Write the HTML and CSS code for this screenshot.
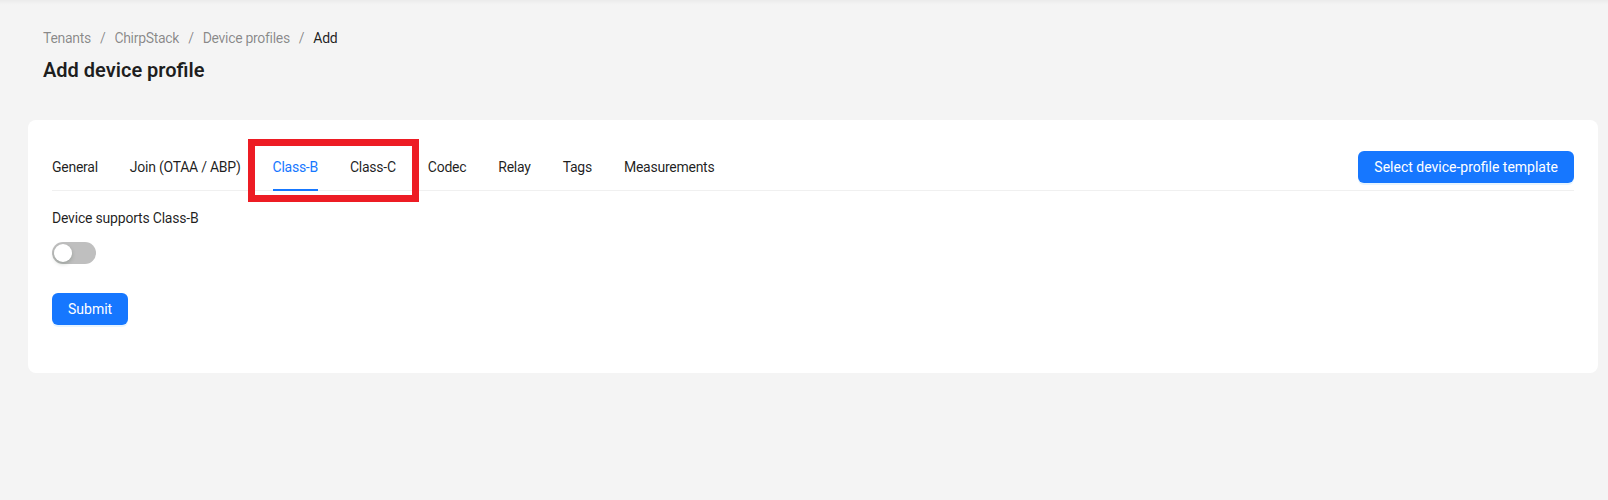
FILE: index.html
```html
<!DOCTYPE html>
<html lang="en">
<head>
<meta charset="utf-8">
<title>Add device profile</title>
<link rel="stylesheet" href="styles.css">
</head>
<body>
<div class="layout">
  <div class="main">
    <div class="page-header">
      <nav class="breadcrumb"><span class="crumb">Tenants</span><span class="sep">/</span><span class="crumb">ChirpStack</span><span class="sep">/</span><span class="crumb">Device profiles</span><span class="sep">/</span><span class="crumb current">Add</span></nav>
      <h1 class="title">Add device profile</h1>
    </div>
    <div class="card">
      <div class="tabs-nav">
        <div class="tab-list">
          <div class="tab">General</div>
          <div class="tab">Join (OTAA / ABP)</div>
          <div class="tab active">Class-B</div>
          <div class="tab">Class-C</div>
          <div class="tab">Codec</div>
          <div class="tab">Relay</div>
          <div class="tab">Tags</div>
          <div class="tab">Measurements</div>
        </div>
        <button class="btn btn-primary">Select device-profile template</button>
      </div>
      <div class="form-item">
        <label class="form-label">Device supports Class-B</label>
        <div class="form-control">
          <span class="switch"><span class="switch-handle"></span></span>
        </div>
      </div>
      <div class="form-item">
        <button class="btn btn-primary">Submit</button>
      </div>
      <div class="highlight"></div>
    </div>
  </div>
</div>
</body>
</html>
```

FILE: styles.css
```css
* { box-sizing: border-box; }

html, body {
  margin: 0;
  padding: 0;
}

body {
  background: #f4f4f4;
  font-family: Roboto, "Liberation Sans", Arial, sans-serif;
  font-size: 14px;
  letter-spacing: -0.2px;
  color: rgba(0, 0, 0, 0.88);
  height: 500px;
  overflow: hidden;
}

.layout {
  min-height: 500px;
  background: linear-gradient(to bottom, #ebebeb 0px, #f1f1f1 3px, #f4f4f4 5px);
}

.main {
  padding: 27px 10px 0 28px;
}

.page-header {
  padding: 0 15px;
}

.breadcrumb {
  line-height: 22px;
  color: rgba(0, 0, 0, 0.45);
  letter-spacing: -0.3px;
}

.sep {
  margin: 0 9px;
}

.crumb.current {
  color: rgba(0, 0, 0, 0.88);
}

.title {
  margin: 5px 0 0;
  font-size: 20px;
  font-weight: 600;
  line-height: 32px;
  letter-spacing: 0;
  color: rgba(0, 0, 0, 0.88);
}

.card {
  position: relative;
  margin-top: 34px;
  background: #fff;
  border-radius: 8px;
  padding: 24px;
}

.tabs-nav {
  display: flex;
  align-items: center;
  border-bottom: 1px solid #f0f0f0;
  margin-bottom: 16px;
}

.tab-list {
  display: flex;
  gap: 32px;
}

.tab {
  position: relative;
  padding: 12px 0;
  line-height: 22px;
  letter-spacing: -0.25px;
  color: rgba(0, 0, 0, 0.88);
}

.tab.active {
  color: #1677ff;
}

.tab.active::after {
  content: "";
  position: absolute;
  left: 0;
  right: 0;
  bottom: -1px;
  height: 2px;
  background: #1677ff;
}

.btn {
  font-family: inherit;
  font-size: 14px;
  line-height: 22px;
  letter-spacing: 0;
  height: 32px;
  padding: 4px 15px;
  border-radius: 6px;
  border: 1px solid transparent;
  cursor: pointer;
}

.btn-primary {
  background: #1677ff;
  color: #fff;
  box-shadow: 0 2px 0 rgba(5, 145, 255, 0.1);
}

.tabs-nav .btn {
  margin-left: auto;
}

.form-item {
  margin-bottom: 24px;
}

.form-label {
  display: block;
  line-height: 22px;
  padding-bottom: 8px;
}

.form-control {
  min-height: 32px;
  display: flex;
  align-items: center;
}

.switch {
  position: relative;
  display: inline-block;
  width: 44px;
  height: 22px;
  border-radius: 11px;
  background: #bfbfbf;
}

.switch-handle {
  position: absolute;
  top: 2px;
  left: 2px;
  width: 18px;
  height: 18px;
  border-radius: 50%;
  background: #fff;
  box-shadow: 0 2px 4px 0 rgba(0, 35, 11, 0.2);
}

.highlight {
  position: absolute;
  left: 220px;
  top: 19px;
  width: 171px;
  height: 63px;
  border: 7px solid #ed1c24;
  pointer-events: none;
}
```
